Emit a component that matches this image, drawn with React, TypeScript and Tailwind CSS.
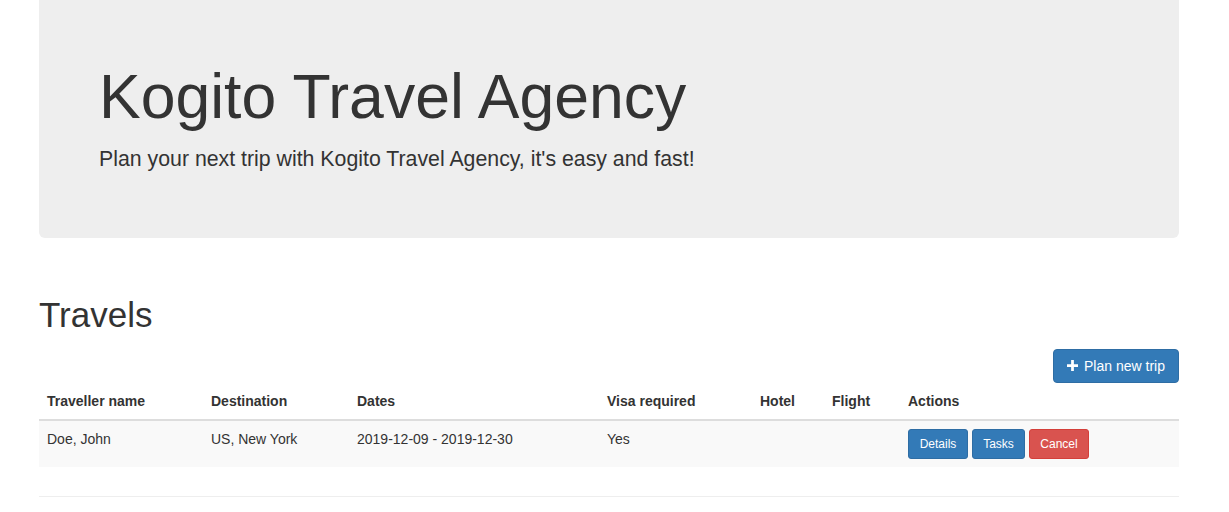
import React from 'react';

const trips = [
  {
    id: 1,
    name: 'Doe, John',
    destination: 'US, New York',
    dates: '2019-12-09 - 2019-12-30',
    visa: 'Yes',
    hotel: '',
    flight: '',
  },
];

const columns = ['Traveller name', 'Destination', 'Dates', 'Visa required', 'Hotel', 'Flight', 'Actions'];

function PlusIcon() {
  return (
    <svg width="11" height="11" viewBox="0 0 12 12" className="inline-block mr-[6px] -mt-[3px] align-middle">
      <path d="M4.5 0h3v4.5H12v3H7.5V12h-3V7.5H0v-3h4.5z" fill="#fff" />
    </svg>
  );
}

export default function App() {
  return (
    <div className="min-h-[512px] bg-white text-[#333] text-[14px] font-['Liberation_Sans',Arial,sans-serif]">
      <div className="ml-[39px] w-[1140px]">
        {/* Jumbotron */}
        <div className="bg-[#eee] rounded-b-[6px] pl-[60px] pr-[60px] pt-[62px] pb-[64px]">
          <h1 className="text-[62.5px] leading-[69px] font-normal">Kogito Travel Agency</h1>
          <p className="mt-[14px] text-[21.3px] leading-[29px] font-light">
            Plan your next trip with Kogito Travel Agency, it's easy and fast!
          </p>
        </div>

        {/* Travels */}
        <h1 className="mt-[57px] text-[35px] leading-[40px] font-normal">Travels</h1>

        <div className="mt-[14px] flex justify-end">
          <button className="h-[34px] w-[126px] px-[12px] rounded-[4px] bg-[#337ab7] border border-[#2e6da4] text-white text-[14px] leading-[20px]">
            <PlusIcon />
            Plan new trip
          </button>
        </div>

        <table className="w-full table-fixed border-collapse text-left">
          <colgroup>
            <col className="w-[164px]" />
            <col className="w-[146px]" />
            <col className="w-[250px]" />
            <col className="w-[153px]" />
            <col className="w-[72px]" />
            <col className="w-[76px]" />
            <col />
          </colgroup>
          <thead>
            <tr className="border-b-2 border-[#ddd]">
              {columns.map((c) => (
                <th key={c} className="px-[8px] py-[8px] leading-[20px] font-bold">
                  {c}
                </th>
              ))}
            </tr>
          </thead>
          <tbody>
            {trips.map((t) => (
              <tr key={t.id} className="bg-[#f9f9f9]">
                <td className="px-[8px] py-[8px] leading-[20px] align-top">{t.name}</td>
                <td className="px-[8px] py-[8px] leading-[20px] align-top">{t.destination}</td>
                <td className="px-[8px] py-[8px] leading-[20px] align-top">{t.dates}</td>
                <td className="px-[8px] py-[8px] leading-[20px] align-top">{t.visa}</td>
                <td className="px-[8px] py-[8px] leading-[20px] align-top">{t.hotel}</td>
                <td className="px-[8px] py-[8px] leading-[20px] align-top">{t.flight}</td>
                <td className="px-[8px] py-[8px] leading-[20px] align-top">
                  <div className="flex gap-[4px]">
                    <button className="h-[30px] w-[60px] rounded-[3px] bg-[#337ab7] border border-[#2e6da4] text-white text-[12px] leading-[18px]">
                      Details
                    </button>
                    <button className="h-[30px] w-[53px] rounded-[3px] bg-[#337ab7] border border-[#2e6da4] text-white text-[12px] leading-[18px]">
                      Tasks
                    </button>
                    <button className="h-[30px] w-[60px] rounded-[3px] bg-[#d9534f] border border-[#d43f3a] text-white text-[12px] leading-[18px]">
                      Cancel
                    </button>
                  </div>
                </td>
              </tr>
            ))}
          </tbody>
        </table>

        <hr className="mt-[29px] border-0 border-t border-[#eee]" />
      </div>
    </div>
  );
}
